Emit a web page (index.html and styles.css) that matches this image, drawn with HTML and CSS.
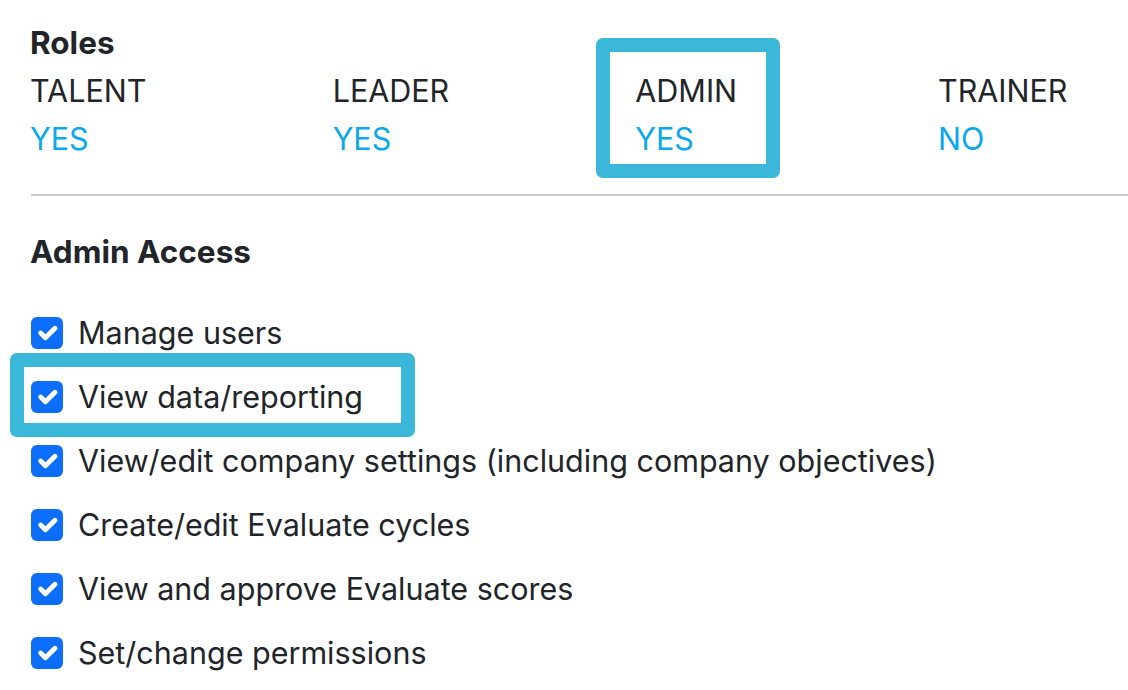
FILE: index.html
```html
<!DOCTYPE html>
<html lang="en">
<head>
<meta charset="utf-8">
<title>Roles</title>
<link rel="stylesheet" href="styles.css">
</head>
<body>
<main class="page">
  <section class="roles">
    <h2 class="heading">Roles</h2>
    <div class="role-grid">
      <div class="role"><div class="role-name">TALENT</div><div class="role-value">YES</div></div>
      <div class="role"><div class="role-name">LEADER</div><div class="role-value">YES</div></div>
      <div class="role highlight-admin"><div class="role-name">ADMIN</div><div class="role-value">YES</div></div>
      <div class="role"><div class="role-name">TRAINER</div><div class="role-value">NO</div></div>
    </div>
  </section>
  <hr class="divider">
  <section class="access">
    <h2 class="heading">Admin Access</h2>
    <ul class="perm-list">
      <li class="perm"><span class="check"><svg viewBox="0 0 20 20"><path d="M6 10l3 3l6-6"/></svg></span><span>Manage users</span></li>
      <li class="perm highlight-row"><span class="check"><svg viewBox="0 0 20 20"><path d="M6 10l3 3l6-6"/></svg></span><span>View data/reporting</span></li>
      <li class="perm"><span class="check"><svg viewBox="0 0 20 20"><path d="M6 10l3 3l6-6"/></svg></span><span>View/edit company settings (including company objectives)</span></li>
      <li class="perm"><span class="check"><svg viewBox="0 0 20 20"><path d="M6 10l3 3l6-6"/></svg></span><span>Create/edit Evaluate cycles</span></li>
      <li class="perm"><span class="check"><svg viewBox="0 0 20 20"><path d="M6 10l3 3l6-6"/></svg></span><span>View and approve Evaluate scores</span></li>
      <li class="perm"><span class="check"><svg viewBox="0 0 20 20"><path d="M6 10l3 3l6-6"/></svg></span><span>Set/change permissions</span></li>
    </ul>
  </section>
</main>
</body>
</html>
```
FILE: styles.css
```css
html, body {
  margin: 0;
  padding: 0;
  background: #ffffff;
  overflow: hidden;
}
body {
  font-family: Inter, "Noto Sans", "Liberation Sans", sans-serif;
  font-size: 30.5px;
  line-height: 48px;
  color: #212529;
}
.page {
  padding: 19px 0 0 30px;
}
.heading {
  margin: 0;
  font-size: 31.5px;
  font-weight: 700;
  line-height: 48px;
}
.role-grid {
  display: grid;
  grid-template-columns: 302.67px 302.67px 302.67px 1fr;
}
.role {
  position: relative;
}
.role-value {
  color: #0aa8ef;
}
.highlight-admin::before {
  content: "";
  position: absolute;
  left: -39px;
  top: -29px;
  width: 156px;
  height: 112px;
  border: 14px solid #3ab7d9;
  border-radius: 7px;
}
.divider {
  margin: 31px 0 32px 1px;
  border: 0;
  height: 2px;
  background: #cccccc;
}
.perm-list {
  list-style: none;
  margin: 25px 0 0 1px;
  padding: 0;
}
.perm {
  position: relative;
  display: flex;
  align-items: center;
  gap: 15px;
  line-height: 64px;
  height: 64px;
}
.check {
  width: 32px;
  height: 32px;
  border-radius: 6px;
  background: #0d6efd;
  display: flex;
  flex: none;
}
.check svg {
  width: 32px;
  height: 32px;
  fill: none;
  stroke: #ffffff;
  stroke-width: 3;
  stroke-linecap: round;
  stroke-linejoin: round;
}
.highlight-row::before {
  content: "";
  position: absolute;
  left: -21px;
  top: -12px;
  width: 377px;
  height: 56px;
  border: 14px solid #3ab7d9;
  border-radius: 7px;
}
```
